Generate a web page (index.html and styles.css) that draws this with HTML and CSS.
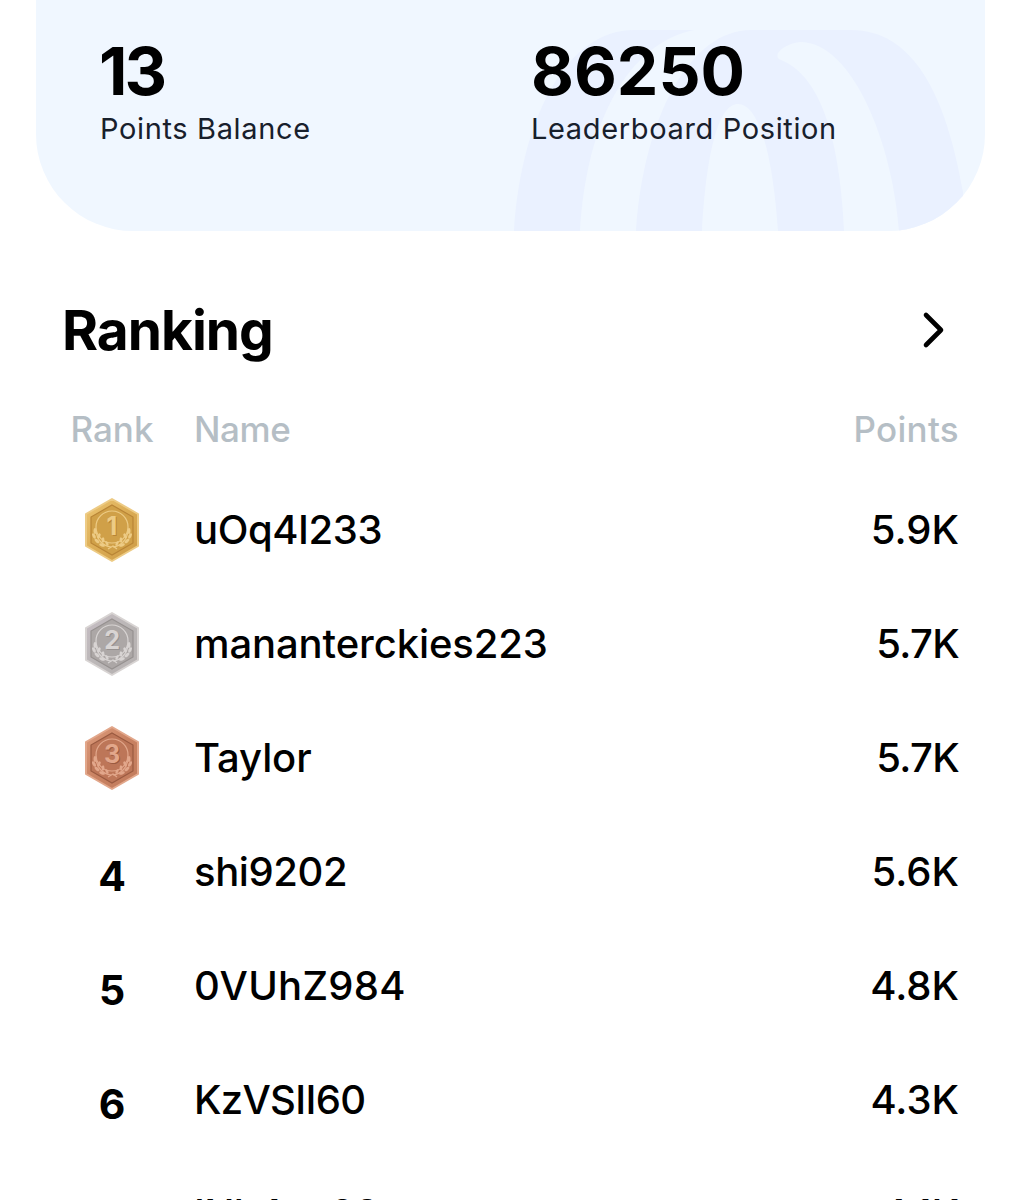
FILE: index.html
```html
<!DOCTYPE html>
<html lang="en">
<head>
  <meta charset="UTF-8">
  <meta name="viewport" content="width=device-width, initial-scale=1">
  <title>Ranking</title>
  <link rel="stylesheet" href="styles.css">
</head>
<body>
  <div class="summary-card">
    <svg class="card-art" viewBox="0 0 949 231" aria-hidden="true">
      <path d="M478 231C485 120 530 30 598 30H658C592 44 551 120 544 231Z"/>
      <path fill-rule="evenodd" d="M600 231C608 115 655 30 715 30H815C877 30 910 94 927 192V231H863C857 145 817 42 764 42C747 44 735 56 745 60C782 75 803 130 808 231H742C736 143 720 104 702 104C684 104 671 145 666 231Z"/>
    </svg>
    <div class="stat">
      <div class="stat-value balance">13</div>
      <div class="stat-label">Points Balance</div>
    </div>
    <div class="stat">
      <div class="stat-value">86250</div>
      <div class="stat-label">Leaderboard Position</div>
    </div>
  </div>

  <div class="ranking">
    <div class="ranking-header">
      <h2>Ranking</h2>
      <svg class="chevron" viewBox="0 0 24 38"><path d="M5 4L20 19L5 34"/></svg>
    </div>

    <div class="row head">
      <span class="rank">Rank</span>
      <span class="title snug">Name</span>
      <span class="title wide">Points</span>
    </div>

    <svg class="defs" aria-hidden="true">
      <defs>
        <linearGradient id="gold" x1="0" y1="0" x2="1" y2="1">
          <stop offset="0" stop-color="#edc673"/><stop offset=".5" stop-color="#dbac55"/><stop offset="1" stop-color="#cc9a45"/>
        </linearGradient>
        <linearGradient id="silver" x1="0" y1="0" x2="1" y2="1">
          <stop offset="0" stop-color="#c6bdc4"/><stop offset=".5" stop-color="#bbb7b7"/><stop offset="1" stop-color="#b5b0b0"/>
        </linearGradient>
        <linearGradient id="bronze" x1="0" y1="0" x2="1" y2="1">
          <stop offset="0" stop-color="#dc9b7c"/><stop offset=".5" stop-color="#c98262"/><stop offset="1" stop-color="#c07a5b"/>
        </linearGradient>
        <g id="laurel">
          <path class="stem" d="M-1 17C-9 16-15 10-16 1"/>
          <ellipse cx="-17" cy="1" rx="1.5" ry="3"/>
          <ellipse cx="-18" cy="6" rx="1.5" ry="3" transform="rotate(-28 -18 6)"/>
          <ellipse cx="-13" cy="6" rx="1.4" ry="2.8" transform="rotate(22 -13 6)"/>
          <ellipse cx="-15" cy="11" rx="1.5" ry="3" transform="rotate(-50 -15 11)"/>
          <ellipse cx="-9" cy="10" rx="1.4" ry="2.8" transform="rotate(3 -9 10)"/>
          <ellipse cx="-10" cy="15" rx="1.5" ry="3" transform="rotate(-72 -10 15)"/>
          <ellipse cx="-5" cy="13.5" rx="1.3" ry="2.5" transform="rotate(-25 -5 13.5)"/>
        </g>
        <g id="emblem">
          <circle class="ring" cx="0" cy="-3" r="16"/>
          <use href="#laurel"/>
          <use href="#laurel" transform="scale(-1 1)"/>
          <path class="stem" d="M-4 19L1 16L5 19"/>
        </g>
      </defs>
    </svg>

    <div class="row">
      <span class="rank">
        <svg class="medal gold" viewBox="-30 -35 60 70">
          <path class="rim" fill="url(#gold)" d="M0-31L26-16V16L0 31L-26 16V-16Z"/>
          <path class="face" d="M0-25L21-13V13L0 25L-21 13V-13Z"/>
          <use href="#emblem"/>
          <text class="digit-shadow" x="1" y="6">1</text><text x="0" y="5">1</text>
        </svg>
      </span>
      <span class="name snug">uOq4I233</span>
      <span class="points">5.9K</span>
    </div>
    <div class="row">
      <span class="rank">
        <svg class="medal silver" viewBox="-30 -35 60 70">
          <path class="rim" fill="url(#silver)" d="M0-31L26-16V16L0 31L-26 16V-16Z"/>
          <path class="face" d="M0-25L21-13V13L0 25L-21 13V-13Z"/>
          <use href="#emblem"/>
          <text class="digit-shadow" x="1" y="6">2</text><text x="0" y="5">2</text>
        </svg>
      </span>
      <span class="name">mananterckies223</span>
      <span class="points narrow">5.7K</span>
    </div>
    <div class="row">
      <span class="rank">
        <svg class="medal bronze" viewBox="-30 -35 60 70">
          <path class="rim" fill="url(#bronze)" d="M0-31L26-16V16L0 31L-26 16V-16Z"/>
          <path class="face" d="M0-25L21-13V13L0 25L-21 13V-13Z"/>
          <use href="#emblem"/>
          <text class="digit-shadow" x="1" y="6">3</text><text x="0" y="5">3</text>
        </svg>
      </span>
      <span class="name">Taylor</span>
      <span class="points narrow">5.7K</span>
    </div>
    <div class="row">
      <span class="rank number">4</span>
      <span class="name snug">shi9202</span>
      <span class="points">5.6K</span>
    </div>
    <div class="row">
      <span class="rank number">5</span>
      <span class="name wide">0VUhZ984</span>
      <span class="points">4.8K</span>
    </div>
    <div class="row">
      <span class="rank number">6</span>
      <span class="name tight">KzVSII60</span>
      <span class="points">4.3K</span>
    </div>
    <div class="row">
      <span class="rank number">7</span>
      <span class="name tight">INh4no08</span>
      <span class="points">4.1K</span>
    </div>
  </div>
</body>
</html>
```
FILE: styles.css
```css
* {
  box-sizing: border-box;
}
body {
  font-family: Inter, "Liberation Sans", sans-serif;
  margin: 0;
  height: 1200px;
  overflow: hidden;
  background: #fff;
  color: #000;
}
.summary-card {
  position: relative;
  display: grid;
  grid-template-columns: 431px 1fr;
  height: 231px;
  margin: 0 28px 0 36px;
  padding: 31px 0 0 64px;
  background: #f0f7ff;
  border-radius: 0 0 97px 97px;
  overflow: hidden;
}
.card-art {
  position: absolute;
  inset: 0;
  width: 100%;
  height: 100%;
  fill: #eaf1ff;
}
.stat {
  position: relative;
}
.stat-value {
  font-size: 66px;
  line-height: 80px;
  font-weight: 700;
}
.balance {
  letter-spacing: -3px;
  text-indent: -1px;
}
.stat-label {
  margin-top: 2px;
  font-size: 29px;
  line-height: 32px;
  letter-spacing: 0.64px;
  color: #18202c;
}
.ranking {
  padding: 69px 54px 0 62px;
}
.ranking-header {
  display: flex;
  justify-content: space-between;
  align-items: center;
  height: 60px;
  padding-right: 14px;
}
h2 {
  margin: 0;
  font-size: 55px;
  font-weight: 700;
  letter-spacing: -1px;
}
.chevron {
  width: 24px;
  height: 38px;
  fill: none;
  stroke: #000;
  stroke-width: 4.6;
  stroke-linecap: round;
  stroke-linejoin: round;
}
.row {
  display: grid;
  grid-template-columns: 100px 1fr auto;
  column-gap: 32px;
  align-items: center;
  height: 114px;
  font-size: 40px;
  font-weight: 500;
}
.row.head {
  height: 113px;
  padding-top: 27px;
  align-items: start;
  font-size: 35px;
  line-height: 84px;
  color: #b5bec5;
}
.rank {
  display: flex;
  justify-content: center;
}
.number {
  padding-top: 8px;
  font-size: 41px;
  font-weight: 700;
}
.name, .points {
  padding-bottom: 1px;
}
.name {
  letter-spacing: -0.1px;
}
.snug {
  letter-spacing: -0.4px;
}
.tight {
  letter-spacing: -0.7px;
}
.wide {
  letter-spacing: 0.3px;
}
.narrow {
  letter-spacing: -0.7px;
}
.defs {
  display: block;
  width: 0;
  height: 0;
}
.medal {
  width: 60px;
  height: 70px;
  --light: #edcb85;
  --dark: #b98536;
  --face: #d0a048;
}
.silver {
  --light: #d8d4d3;
  --dark: #969190;
  --face: #aca7a6;
}
.bronze {
  --light: #e2a78b;
  --dark: #9a5a40;
  --face: #bd7658;
}
.rim {
  stroke: var(--light);
  stroke-width: 2;
  stroke-linejoin: round;
}
.face {
  fill: var(--face);
  stroke: var(--dark);
  stroke-width: 1.2;
}
.ring, .stem {
  fill: none;
  stroke: var(--light);
  stroke-width: 1.2;
}
.medal ellipse, #laurel ellipse {
  fill: var(--light);
}
.medal text {
  font-size: 25px;
  font-weight: 700;
  text-anchor: middle;
  fill: var(--light);
}
.medal .digit-shadow {
  fill: var(--dark);
}
```
